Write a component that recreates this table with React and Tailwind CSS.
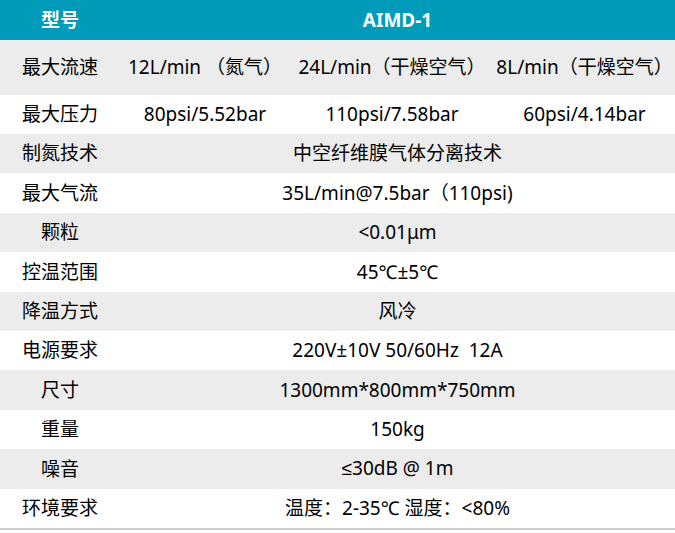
import React from "react";

const specs = [
    { label: "制氮技术", value: "中空纤维膜气体分离技术" },
    { label: "最大气流", value: "35L/min@7.5bar（110psi)" },
    { label: "颗粒", value: "<0.01μm" },
    { label: "控温范围", value: "45℃±5℃" },
    { label: "降温方式", value: "风冷" },
    { label: "电源要求", value: "220V±10V 50/60Hz\u00a0\u00a012A" },
    { label: "尺寸", value: "1300mm*800mm*750mm" },
    { label: "重量", value: "150kg" },
    {
        label: "噪音",
        value: (
            <>
                <span style={{ fontFamily: '"Liberation Sans", sans-serif' }}>≤</span>30dB @ 1m
            </>
        ),
    },
    { label: "环境要求", value: "温度：2-35℃ 湿度：<80%" },
];

// rows with three models side by side
const SplitRow = ({ label, values, className }) => (
    <div className={`flex items-center ${className}`}>
        <div className="w-[120px] text-center">{label}</div>
        <div className="w-[170px] text-center whitespace-nowrap">{values[0]}</div>
        <div className="w-[204px] text-center whitespace-nowrap">{values[1]}</div>
        <div className="flex-1 text-center whitespace-nowrap">{values[2]}</div>
    </div>
);

export default function App() {
    return (
        <div
            className="w-[675px] h-[533px] bg-white text-[19px] text-black"
            style={{ fontFamily: '"Noto Sans", "Noto Sans CJK SC", sans-serif' }}
        >
            <div className="border-b-2 border-[#cbcbcb]">
                <div className="flex items-center h-10 bg-[#009bb8] text-white font-bold">
                    <div className="w-[120px] text-center">型号</div>
                    <div className="flex-1 text-center">AIMD-1</div>
                </div>
                <SplitRow
                    label="最大流速"
                    values={["12L/min （氮气）", "24L/min（干燥空气）", "8L/min（干燥空气）"]}
                    className="h-[55px] bg-[#ececec]"
                />
                <SplitRow
                    label="最大压力"
                    values={["80psi/5.52bar", "110psi/7.58bar", "60psi/4.14bar"]}
                    className="h-[39px] bg-white"
                />
                {specs.map((row, index) => (
                    <div
                        key={row.label}
                        className={`flex items-center h-[39.4px] ${index % 2 === 0 ? "bg-[#ececec]" : "bg-white"}`}
                    >
                        <div className="w-[120px] text-center">{row.label}</div>
                        <div className="flex-1 text-center whitespace-nowrap">{row.value}</div>
                    </div>
                ))}
            </div>
        </div>
    );
}
